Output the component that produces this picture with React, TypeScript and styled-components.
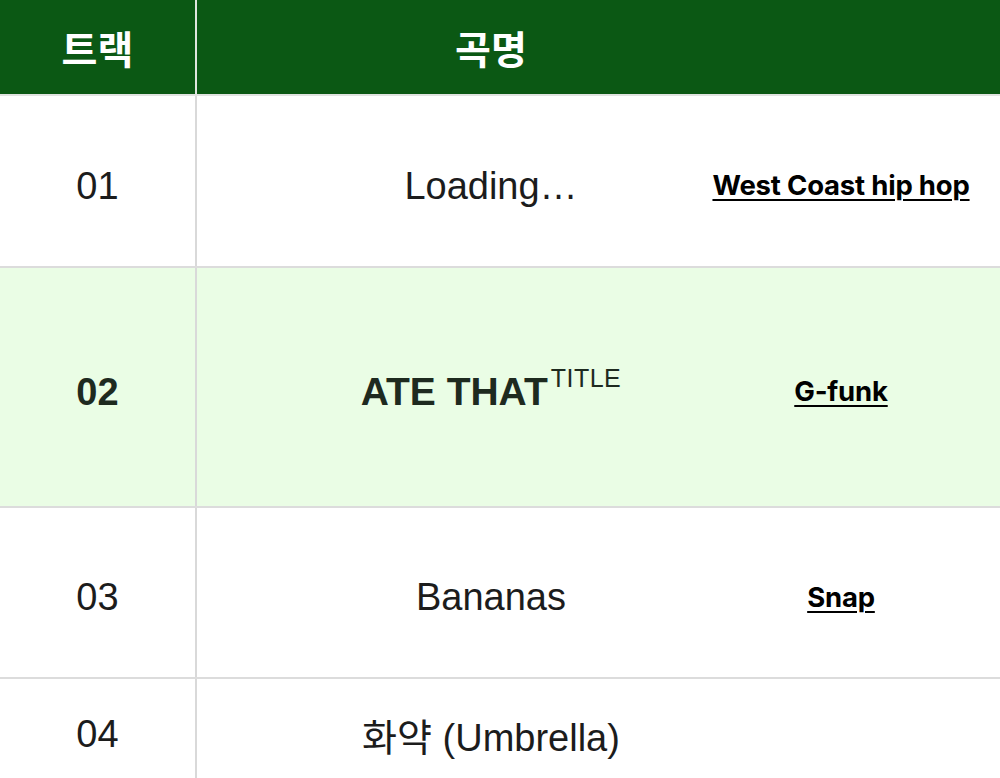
import React from 'react';
import styled, { createGlobalStyle } from "styled-components";

const GlobalStyle = createGlobalStyle`
  body {
    margin: 0;
    background: #ffffff;
    font-family: "Liberation Sans", "Noto Sans CJK KR", sans-serif;
    overflow: hidden;
  }
`

const TrackTable = styled.div`
  width: 1000px;
  display: flex;
  flex-direction: column;
`

const HeaderRow = styled.div`
  display: grid;
  grid-template-columns: 197px 588px 215px;
  height: 94px;
  background: #0b5814;
  border-bottom: 2px solid #e1e3e1;
`

const HeadCell = styled.div<{ $divider?: boolean }>`
  display: flex;
  align-items: center;
  justify-content: center;
  color: #ffffff;
  font-family: "Noto Sans CJK KR", sans-serif;
  font-size: 39px;
  font-weight: 700;
  box-sizing: border-box;
  border-right: ${p => (p.$divider ? "2px solid #dfe6df" : "none")};
`

const Row = styled.div<{ $height: number; $active?: boolean }>`
  display: grid;
  grid-template-columns: 197px 588px 215px;
  height: ${p => p.$height}px;
  background: ${p => (p.$active ? "#eafde5" : "#ffffff")};
  border-bottom: 2px solid #dcdcdc;
  color: ${p => (p.$active ? "#1e2a1f" : "#1c1c1c")};
`

const TrackCell = styled.div<{ $active?: boolean }>`
  display: flex;
  align-items: center;
  justify-content: center;
  box-sizing: border-box;
  padding-top: 10px;
  border-right: 2px solid #d9d9d9;
  font-size: 38px;
  font-weight: ${p => (p.$active ? 700 : 400)};
`

const TitleCell = styled.div<{ $active?: boolean }>`
  display: flex;
  align-items: center;
  justify-content: center;
  box-sizing: border-box;
  padding-top: 10px;
  font-size: ${p => (p.$active ? 39 : 38)}px;
  font-weight: ${p => (p.$active ? 700 : 400)};
  white-space: nowrap;
`

const TitleBadge = styled.sup`
  font-size: 25px;
  font-weight: 400;
  letter-spacing: 0.5px;
  vertical-align: 18px;
  line-height: 0;
  margin-left: 3px;
`

const GenreCell = styled.div`
  display: flex;
  align-items: center;
  justify-content: center;
  box-sizing: border-box;
  padding-top: 8px;
  padding-right: 103px;
  white-space: nowrap;
  min-width: 0;
`

const GenreLink = styled.a`
  flex-shrink: 0;
  font-family: Inter, "Noto Sans", sans-serif;
  font-size: 27.5px;
  font-weight: 700;
  letter-spacing: -0.2px;
  color: #000000;
  text-decoration: underline;
  text-decoration-thickness: 2px;
  text-underline-offset: 4px;
`

type Track = {
  no: string;
  title: string;
  genre?: string;
  height: number;
  active?: boolean;
};

const tracks: Track[] = [
  { no: "01", title: "Loading…", genre: "West Coast hip hop", height: 170 },
  { no: "02", title: "ATE THAT", genre: "G-funk", height: 238, active: true },
  { no: "03", title: "Bananas", genre: "Snap", height: 169 },
  { no: "04", title: "화약 (Umbrella)", height: 100 },
];

const App = () => {
  return (
    <>
      <GlobalStyle/>
      <TrackTable>
        <HeaderRow>
          <HeadCell $divider>트랙</HeadCell>
          <HeadCell>곡명</HeadCell>
          <HeadCell/>
        </HeaderRow>
        {tracks.map(t => (
          <Row key={t.no} $height={t.height} $active={t.active}>
            <TrackCell $active={t.active}>{t.no}</TrackCell>
            <TitleCell $active={t.active}>
              <span>
                {t.title}
                {t.active && <TitleBadge>TITLE</TitleBadge>}
              </span>
            </TitleCell>
            <GenreCell>
              {t.genre && <GenreLink href="#">{t.genre}</GenreLink>}
            </GenreCell>
          </Row>
        ))}
      </TrackTable>
    </>
  );
}

export default App;
